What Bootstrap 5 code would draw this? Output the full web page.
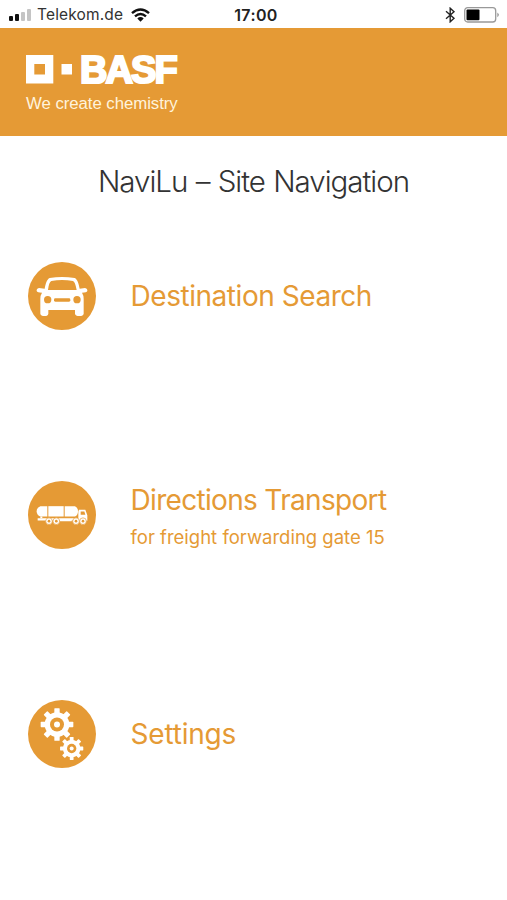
<!DOCTYPE html>
<html lang="en">
<head>
<meta charset="utf-8">
<meta name="viewport" content="width=device-width, initial-scale=1">
<title>NaviLu</title>
<link href="https://cdn.jsdelivr.net/npm/bootstrap@5.3.0/dist/css/bootstrap.min.css" rel="stylesheet">
<style>
  :root { --brand: #e59a35; }
  body { font-family: Inter, "Liberation Sans", sans-serif; height: 900px; overflow: hidden; }
  svg { display: block; }
  .status-bar { height: 28px; color: #222; font-size: 15.5px; line-height: 28px; padding: 1px 7px 0 9px; }
  .status-side { flex: 1 1 0; }
  .carrier { margin-left: 5px; margin-right: 8px; color: #333; letter-spacing: .15px; }
  .clock { font-weight: 600; font-size: 16px; letter-spacing: .4px; margin-left: 3px; }
  .brand-bar { height: 107.5px; background: var(--brand); padding: 26px 26px 0; color: #fff; font-family: "Liberation Sans", Arial, sans-serif; }
  .brand-name { font-weight: 700; font-size: 38px; line-height: 32px; letter-spacing: -1.9px; -webkit-text-stroke: 2.2px #fff; margin-left: 6px; }
  .claim { font-size: 16.8px; line-height: 20px; margin-top: 8px; color: #fff3dc; letter-spacing: -.05px; }
  .page-title { font-size: 29.5px; line-height: 36px; font-weight: 300; color: #333; margin: 27px 0 0; letter-spacing: -1px; word-spacing: 1px; }
  .menu-entry { height: 219px; padding-left: 28px; color: var(--brand); }
  .menu-entry:hover { color: var(--brand); }
  .menu-list { margin-top: -12px; }
  .disc { width: 68px; height: 68px; margin-right: 34.5px; flex: none; }
  .entry-title { font-size: 28px; line-height: 36px; letter-spacing: -.45px; }
  .entry-title-tight { letter-spacing: -.68px; }
  .entry-title-loose { letter-spacing: -.2px; }
  .entry-note { font-size: 18.5px; line-height: 24px; margin-top: 7px; margin-bottom: -1px; }
</style>
</head>
<body class="bg-white">
<div class="status-bar d-flex align-items-center">
  <div class="status-side d-flex align-items-center">
    <svg width="23" height="14" viewBox="0 0 23 14"><g fill="#111"><rect x="0" y="8" width="4" height="5" rx="1"/><rect x="6" y="6" width="4" height="7" rx="1"/></g><g fill="#c4c4c4"><rect x="12" y="4" width="4" height="9" rx="1"/><rect x="18" y="1" width="4" height="12" rx="1"/></g></svg>
    <span class="carrier">Telekom.de</span>
    <svg width="19" height="14" viewBox="0 0 19 14"><g fill="none" stroke="#111" stroke-width="2.4"><path d="M1 5.2Q9.500-2.300 18 5.200"/><path d="M4 8.300Q9.500 3.500 15 8.300"/></g><path d="M6.300 10.400Q9.500 7.600 12.700 10.400L9.500 13.700Z" fill="#111"/></svg>
  </div>
  <span class="clock">17:00</span>
  <div class="status-side d-flex align-items-center justify-content-end">
    <svg width="11" height="16" viewBox="0 0 11 16" class="me-2"><path d="M1 4.300L9 11.300L5.200 14.800V1.200L9 4.700L1 11.700" fill="none" stroke="#222" stroke-width="1.400"/></svg>
    <svg width="36" height="16" viewBox="0 0 36 16"><rect x=".7" y=".7" width="31" height="14.300" rx="3" fill="#fff" stroke="#999" stroke-width="1.300"/><rect x="2.500" y="2.500" width="13" height="10.700" rx="1" fill="#000"/><path d="M33.300 5.500Q36.500 7.800 33.300 10.200Z" fill="#999"/></svg>
  </div>
</div>
<header class="brand-bar">
  <div class="d-flex align-items-start">
    <svg width="48" height="30" viewBox="0 0 48 30"><path fill="#fff" fill-rule="evenodd" d="M0 1H27.300V29.500H0ZM8.300 10V20.500H19V10ZM35.500 10H46V20.500H35.500Z"/></svg>
    <span class="brand-name">BASF</span>
  </div>
  <div class="claim">We create chemistry</div>
</header>
<main>
  <h1 class="page-title text-center">NaviLu – Site Navigation</h1>
  <nav class="menu-list d-flex flex-column">
    <a href="#" class="menu-entry d-flex align-items-center text-decoration-none">
      <svg class="disc" viewBox="23 20 204 204"><circle cx="125" cy="122" r="102" fill="#e59a35"/>
        <path fill="#fff" fill-rule="evenodd" d="M73 100C76 84 80 72 88 68Q125 62 163 68C171 72 175 84 178 100L194 98Q202 100 201 107Q199 112 185 112Q190 120 190 130V175Q189 182 177 182Q165 182 164 175V164H84V175Q83 182 73 182Q61 182 60 175V130Q60 120 65 112Q51 112 49 107Q48 100 56 98ZM83 104H169C166 88 163 79 158 77Q125 71 93 77C88 79 85 88 83 104Z"/>
        <g fill="#e59a35"><circle cx="82" cy="133" r="11"/><circle cx="170" cy="133" r="11"/><rect x="101" y="129" width="49" height="10" rx="4"/></g>
      </svg>
      <span class="entry-title">Destination Search</span>
    </a>
    <a href="#" class="menu-entry d-flex align-items-center text-decoration-none">
      <svg class="disc" viewBox="23 17.500 204 204"><circle cx="125" cy="119.500" r="102" fill="#e59a35"/>
        <g fill="#fff"><path d="M60 93H81V124H60Q49 120 49 108Q49 97 60 93Z"/><rect x="84" y="93" width="46" height="31"/><path d="M133 93H164Q173 97 173 108Q173 120 164 124H133Z"/>
        <path d="M52 129H174V136H154V138H118V136H52Z"/>
        <path fill-rule="evenodd" d="M176 104H195L201 120V137H174V109ZM181 109V119H195L192 109Z"/>
        <path d="M60 124H66V129H60Z"/></g>
        <g fill="#fff" stroke="#e59a35" stroke-width="2"><circle cx="86" cy="138" r="10"/><circle cx="108" cy="138" r="10"/><circle cx="167" cy="138" r="10"/><circle cx="188" cy="138" r="10"/></g>
        <g fill="#e59a35"><circle cx="86" cy="138" r="4"/><circle cx="108" cy="138" r="4"/><circle cx="167" cy="138" r="4"/><circle cx="188" cy="138" r="4"/></g>
      </svg>
      <span class="d-flex flex-column"><span class="entry-title entry-title-tight">Directions Transport</span><span class="entry-note">for freight forwarding gate 15</span></span>
    </a>
    <a href="#" class="menu-entry d-flex align-items-center text-decoration-none">
      <svg class="disc" viewBox="23 28.500 204 204"><circle cx="125" cy="130.500" r="102" fill="#e59a35"/>
        <defs><g id="cog"><circle r="37"/><g id="teeth"><rect x="-8" y="-49" width="16" height="98" rx="2"/><rect x="-49" y="-8" width="98" height="16" rx="2"/></g><use href="#teeth" transform="rotate(45)"/></g></defs>
        <g transform="translate(110 102)"><use href="#cog" fill="#fff"/><circle r="21" fill="#e59a35"/><circle r="9" fill="#fff"/></g>
        <g transform="translate(154 174)"><use href="#cog" fill="#fff" transform="scale(.71)"/><circle r="14" fill="#e59a35"/><circle r="6" fill="#fff"/></g>
      </svg>
      <span class="entry-title entry-title-loose">Settings</span>
    </a>
  </nav>
</main>
<script src="https://cdn.jsdelivr.net/npm/bootstrap@5.3.0/dist/js/bootstrap.bundle.min.js"></script>
</body>
</html>
